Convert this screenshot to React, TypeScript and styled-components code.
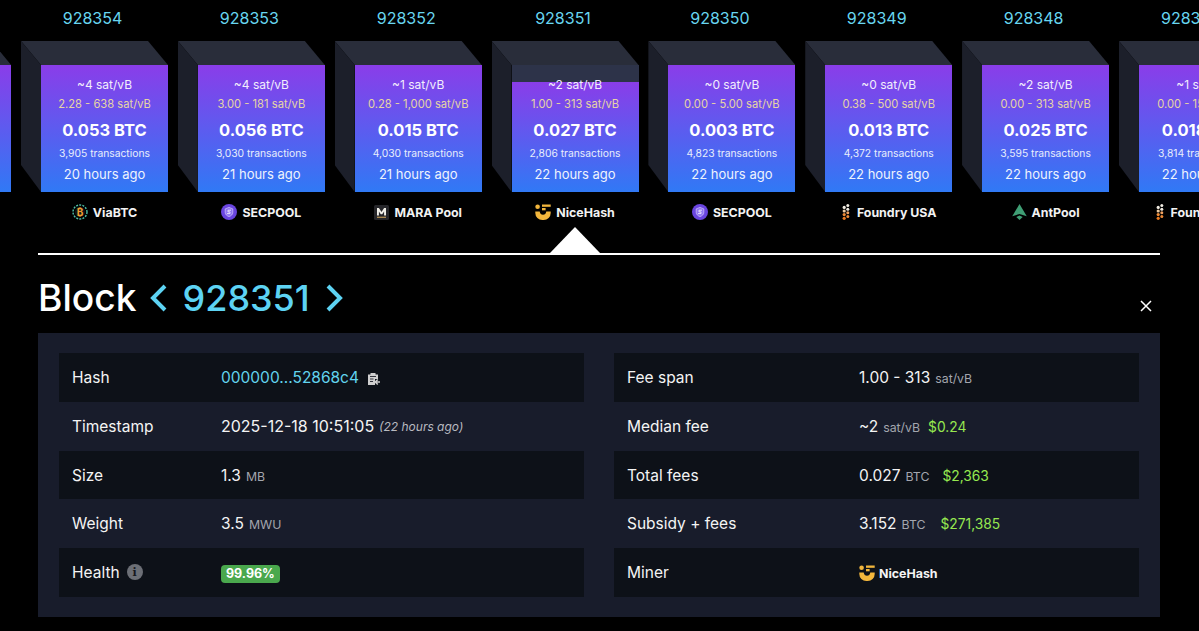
import React from 'react';
import styled, { createGlobalStyle } from 'styled-components';

const GlobalStyle = createGlobalStyle`
    html, body {
        margin: 0;
        padding: 0;
        background: #000;
        color: #fff;
        font-family: Inter, "Liberation Sans", sans-serif;
    }
`;

const Page = styled.div`
    width: 1199px;
    height: 631px;
    overflow: hidden;
    background: #000;
`;

const Chain = styled.div`
    display: flex;
    margin-left: -135.85px;
    height: 232px;
`;
const BlockColumn = styled.div`
    flex: 0 0 156.85px;
    display: flex;
    flex-direction: column;
`;
const Height = styled.div`
    flex: none;
    width: 143px;
    height: 41px;
    line-height: 37px;
    text-align: center;
    font-size: 16px;
    color: #68d6f0;
`;
const Cube = styled.div<{ $used: number }>`
    flex: none;
    position: relative;
    box-sizing: border-box;
    width: 127px;
    height: 127px;
    margin: 24px 0 0 20px;
    padding-top: 12px;
    display: flex;
    flex-direction: column;
    align-items: center;
    color: #fff;
    background: linear-gradient(#8a3de9, #3079f5) no-repeat left bottom / 100% ${props => props.$used}%, #2d3349;

    &::before {
        content: '';
        position: absolute;
        left: -20px;
        top: -24px;
        width: 147px;
        height: 24px;
        background: #292d3a;
        clip-path: polygon(0 0, 127px 0, 100% 100%, 20px 100%);
    }
    &::after {
        content: '';
        position: absolute;
        left: -20px;
        top: -24px;
        width: 20px;
        height: 151px;
        background: #1c1f2a;
        clip-path: polygon(0 0, 100% 24px, 100% 100%, 0 124px);
    }
`;
const MedianFee = styled.div`
    font-size: 12px;
    line-height: 16px;
    color: #f2eefc;
`;
const FeeRange = styled.div`
    margin-top: 3px;
    font-size: 11.2px;
    line-height: 16px;
    color: #e6d5a4;
`;
const Reward = styled.div`
    margin-top: 7px;
    font-size: 16.5px;
    line-height: 22px;
    font-weight: 700;
`;
const TxCount = styled.div`
    margin-top: 5px;
    font-size: 10.3px;
    line-height: 14px;
    color: #e8eefc;
`;
const Age = styled.div`
    margin-top: 5px;
    font-size: 13px;
    line-height: 18px;
    color: #eef3fd;
`;
const MinerTag = styled.div`
    flex: none;
    display: flex;
    align-items: center;
    justify-content: center;
    gap: 5px;
    width: 127px;
    height: 40px;
    margin-left: 20px;
    font-size: 12.4px;
    font-weight: 700;
    white-space: nowrap;
    color: #f2f2f2;
`;

const Divider = styled.div`
    position: relative;
    height: 2px;
    margin: 21px 39px 0 38px;
    background: #fff;
    &::before {
        content: '';
        position: absolute;
        left: 512px;
        bottom: 2px;
        border-left: 25px solid transparent;
        border-right: 25px solid transparent;
        border-bottom: 26px solid #fff;
    }
`;

const Details = styled.div`
    margin: 0 39px 0 38px;
`;
const TitleRow = styled.div`
    display: flex;
    align-items: center;
    justify-content: space-between;
    height: 78px;
`;
const Title = styled.div`
    display: flex;
    align-items: center;
    margin-top: 8px;
`;
const BlockWord = styled.span`
    font-size: 37.2px;
    font-weight: 500;
    line-height: 44px;
    margin-right: 11px;
`;
const BlockNo = styled.span`
    font-size: 36px;
    font-weight: 500;
    line-height: 44px;
    color: #5dd3f3;
    margin: 0 15px;
`;
const Nav = styled.svg`
    width: 20px;
    height: 30px;
    flex: none;
`;
const CloseIcon = styled.svg`
    width: 12px;
    height: 12px;
    margin: 24px 8px 0 0;
`;
const Panel = styled.div`
    display: grid;
    grid-template-columns: 525px 525px;
    column-gap: 30px;
    padding: 20.4px 21px 0;
    background: #181c2b;
    height: 284px;
    box-sizing: border-box;
`;
const Table = styled.div<{ $labelWidth: number }>`
    display: grid;
    grid-template-columns: ${props => props.$labelWidth}px 1fr;
    grid-auto-rows: 48.7px;
    font-size: 15.5px;
`;
const Row = styled.div`
    display: contents;
    &:nth-child(odd) > * { background: #0d1118; }
`;
const Label = styled.div`
    display: flex;
    align-items: center;
    gap: 7px;
    padding-left: 13px;
    color: #f4f4f4;
`;
const Value = styled.div`
    display: flex;
    align-items: center;
    color: #f4f4f4;
    white-space: pre;
`;
const Timestamp = styled.span`
    font-size: 16px;
`;
const Unit = styled.span`
    margin-left: 5px;
    font-size: 12.3px;
    color: #a3a6ae;
    padding-top: 2px;
`;
const Usd = styled.span<{ $gap: number }>`
    margin-left: ${props => props.$gap}px;
    font-size: 13.8px;
    color: #96e850;
    padding-top: 1px;
`;
const HashLink = styled.span`
    color: #62d4ee;
`;
const Ago = styled.i`
    margin-left: 5px;
    font-size: 12px;
    color: #b8bac0;
`;
const HealthBadge = styled.span`
    padding: 1px 5px;
    border-radius: 4px;
    background: #4aa84d;
    color: #fff;
    font-size: 12.5px;
    line-height: 16px;
    font-weight: 700;
    margin-top: 3px;
`;
const InfoDot = styled.span`
    display: inline-flex;
    align-items: center;
    justify-content: center;
    width: 16px;
    height: 16px;
    border-radius: 50%;
    background: #6c6f76;
    color: #16181d;
    font-size: 11px;
    font-weight: 800;
    font-family: "DejaVu Serif", serif;
`;
const ClipIcon = styled.svg`
    width: 13px;
    height: 14px;
    margin-left: 8px;
    margin-top: 2px;
`;
const TableMiner = styled.span`
    display: flex;
    align-items: center;
    gap: 4px;
    font-size: 12.4px;
    font-weight: 700;
    margin-top: 3px;
`;

const ViaIcon = () => (
    <svg width="16" height="16" viewBox="0 0 16 16">
        <circle cx="8" cy="8" r="7" fill="none" stroke="#4cc0a8" strokeWidth="1.4" strokeDasharray="2 1.2" />
        <circle cx="8" cy="8" r="5" fill="#10161a" />
        <text x="8" y="11.5" textAnchor="middle" fontSize="10" fontWeight="700" fill="#f0a030">₿</text>
    </svg>
);
const SecpoolIcon = () => (
    <svg width="16" height="16" viewBox="0 0 16 16">
        <circle cx="8" cy="8" r="8" fill="#6a45e0" />
        <path d="M8 3.400l3.800 1.500v3.400c0 2.200-1.700 3.600-3.800 4.300-2.100-.7-3.800-2.100-3.800-4.300V4.900z" fill="#8f74f2" stroke="#d6ccfb" strokeWidth=".7" />
        <path d="M10 6.200H7v1.700h2v1.700H6" fill="none" stroke="#efeafe" strokeWidth=".9" />
    </svg>
);
const MaraIcon = () => (
    <svg width="15" height="15" viewBox="0 0 15 15">
        <rect width="15" height="15" rx="1.500" fill="#26262a" />
        <path d="M3 10.500V3h1.900l2.600 4 2.600-4H12v7.500h-1.900V6.400L8.200 9.300H6.800L4.900 6.400v4.100z" fill="#f1efe9" />
        <rect x="3" y="11.700" width="9" height="1.100" fill="#c9a05a" />
    </svg>
);
const NiceHashIcon = () => (
    <svg width="16" height="17" viewBox="0 0 16 17">
        <circle cx="2.600" cy="2.700" r="2.300" fill="#f2b63c" />
        <rect x="7" y=".5" width="8.700" height="2.300" fill="#f2b63c" />
        <rect x="7" y="4" width="3.600" height="2.300" fill="#f2b63c" />
        <path d="M.3 7.500h4.400c.2 2 1.500 3.300 3.300 3.300s3.100-1.300 3.300-3.300h4.400V9a7 7 0 0 1-7 7h-1.400a7 7 0 0 1-7-7z" fill="#f2b63c" />
    </svg>
);
const FoundryIcon = () => (
    <svg width="11" height="16" viewBox="-1 0 11 16">
        <circle cx="5.800" cy="1.600" r="1.500" fill="#f1ece2" />
        <circle cx="2.200" cy="3.400" r="1.600" fill="#f1ece2" />
        <circle cx="5.800" cy="5.200" r="1.500" fill="#f1ece2" />
        <circle cx="2.200" cy="7" r="1.600" fill="#e9c8a0" />
        <circle cx="5.800" cy="8.800" r="1.500" fill="#eea060" />
        <circle cx="2.200" cy="10.600" r="1.600" fill="#ec8a38" />
        <circle cx="5.800" cy="12.400" r="1.500" fill="#ec8a38" />
        <circle cx="2.200" cy="14.300" r="1.600" fill="#ea7a20" />
    </svg>
);
const AntPoolIcon = () => (
    <svg width="15" height="16" viewBox="0 0 14 15">
        <path d="M7 0l6.800 11.500L7 9.400.2 11.500z" fill="#3f9e74" />
        <path d="M7 10.800l3 1.500L7 15l-3-2.700z" fill="#3f9e74" />
    </svg>
);

type Miner = 'via' | 'sec' | 'mara' | 'nice' | 'foundry' | 'ant';

const minerNames: Record<Miner, string> = {
    via: 'ViaBTC',
    sec: 'SECPOOL',
    mara: 'MARA Pool',
    nice: 'NiceHash',
    foundry: 'Foundry USA',
    ant: 'AntPool',
};
const minerIcons: Record<Miner, React.ReactNode> = {
    via: <ViaIcon />,
    sec: <SecpoolIcon />,
    mara: <MaraIcon />,
    nice: <NiceHashIcon />,
    foundry: <FoundryIcon />,
    ant: <AntPoolIcon />,
};

type BlockInfo = {
    height: string,
    median: string,
    range: string,
    reward: string,
    txs: string,
    age: string,
    miner: Miner,
    used: number,
};

const blocks: BlockInfo[] = [
    { height: '928354', median: '~4 sat/vB', range: '2.28 - 638 sat/vB', reward: '0.053 BTC', txs: '3,905 transactions', age: '20 hours ago', miner: 'via', used: 100 },
    { height: '928353', median: '~4 sat/vB', range: '3.00 - 181 sat/vB', reward: '0.056 BTC', txs: '3,030 transactions', age: '21 hours ago', miner: 'sec', used: 100 },
    { height: '928352', median: '~1 sat/vB', range: '0.28 - 1,000 sat/vB', reward: '0.015 BTC', txs: '4,030 transactions', age: '21 hours ago', miner: 'mara', used: 100 },
    { height: '928351', median: '~2 sat/vB', range: '1.00 - 313 sat/vB', reward: '0.027 BTC', txs: '2,806 transactions', age: '22 hours ago', miner: 'nice', used: 87 },
    { height: '928350', median: '~0 sat/vB', range: '0.00 - 5.00 sat/vB', reward: '0.003 BTC', txs: '4,823 transactions', age: '22 hours ago', miner: 'sec', used: 100 },
    { height: '928349', median: '~0 sat/vB', range: '0.38 - 500 sat/vB', reward: '0.013 BTC', txs: '4,372 transactions', age: '22 hours ago', miner: 'foundry', used: 100 },
    { height: '928348', median: '~2 sat/vB', range: '0.00 - 313 sat/vB', reward: '0.025 BTC', txs: '3,595 transactions', age: '22 hours ago', miner: 'ant', used: 100 },
    { height: '928347', median: '~1 sat/vB', range: '0.00 - 155 sat/vB', reward: '0.018 BTC', txs: '3,814 transactions', age: '22 hours ago', miner: 'foundry', used: 100 },
];

const App = () => {
    return (
        <Page>
            <GlobalStyle />
            <Chain>
                <BlockColumn>
                    <Height />
                    <Cube $used={100} />
                </BlockColumn>
                {blocks.map(block => (
                    <BlockColumn key={block.height}>
                        <Height>{block.height}</Height>
                        <Cube $used={block.used}>
                            <MedianFee>{block.median}</MedianFee>
                            <FeeRange>{block.range}</FeeRange>
                            <Reward>{block.reward}</Reward>
                            <TxCount>{block.txs}</TxCount>
                            <Age>{block.age}</Age>
                        </Cube>
                        <MinerTag>{minerIcons[block.miner]}{minerNames[block.miner]}</MinerTag>
                    </BlockColumn>
                ))}
            </Chain>
            <Divider />
            <Details>
                <TitleRow>
                    <Title>
                        <BlockWord>Block</BlockWord>
                        <Nav viewBox="0 0 20 30" fill="none" stroke="#5dd3f3" strokeWidth="4">
                            <path d="M17 3L5 15l12 12" />
                        </Nav>
                        <BlockNo>928351</BlockNo>
                        <Nav viewBox="0 0 20 30" fill="none" stroke="#5dd3f3" strokeWidth="4">
                            <path d="M3 3l12 12L3 27" />
                        </Nav>
                    </Title>
                    <CloseIcon viewBox="0 0 12 12" stroke="#fff" strokeWidth="1.500">
                        <path d="M1 1l10 10M11 1L1 11" />
                    </CloseIcon>
                </TitleRow>
                <Panel>
                    <Table $labelWidth={162}>
                        <Row>
                            <Label>Hash</Label>
                            <Value>
                                <HashLink>000000...52868c4</HashLink>
                                <ClipIcon viewBox="0 0 13 14">
                                    <path d="M1 2.500h2.500V1h5v1.500H11V7H8v6H1z" fill="#cfcfcf" />
                                    <path d="M3 4h6v1H3zM3 6.500h3.500v1H3zM3 9h3v1H3z" fill="#30323a" />
                                    <path d="M13 10H8.500m2.300-2.500L8.200 10l2.600 2.500" fill="none" stroke="#cfcfcf" strokeWidth="1.500" />
                                </ClipIcon>
                            </Value>
                        </Row>
                        <Row>
                            <Label>Timestamp</Label>
                            <Value><Timestamp>2025-12-18 10:51:05</Timestamp><Ago>(22 hours ago)</Ago></Value>
                        </Row>
                        <Row>
                            <Label>Size</Label>
                            <Value>1.3<Unit>MB</Unit></Value>
                        </Row>
                        <Row>
                            <Label>Weight</Label>
                            <Value>3.5<Unit>MWU</Unit></Value>
                        </Row>
                        <Row>
                            <Label>Health<InfoDot>i</InfoDot></Label>
                            <Value><HealthBadge>99.96%</HealthBadge></Value>
                        </Row>
                    </Table>
                    <Table $labelWidth={245}>
                        <Row>
                            <Label>Fee span</Label>
                            <Value>1.00 - 313<Unit>sat/vB</Unit></Value>
                        </Row>
                        <Row>
                            <Label>Median fee</Label>
                            <Value>~2<Unit>sat/vB</Unit><Usd $gap={8}>$0.24</Usd></Value>
                        </Row>
                        <Row>
                            <Label>Total fees</Label>
                            <Value>0.027<Unit>BTC</Unit><Usd $gap={13}>$2,363</Usd></Value>
                        </Row>
                        <Row>
                            <Label>Subsidy + fees</Label>
                            <Value>3.152<Unit>BTC</Unit><Usd $gap={15}>$271,385</Usd></Value>
                        </Row>
                        <Row>
                            <Label>Miner</Label>
                            <Value><TableMiner><NiceHashIcon />NiceHash</TableMiner></Value>
                        </Row>
                    </Table>
                </Panel>
            </Details>
        </Page>
    );
};

export default App;
